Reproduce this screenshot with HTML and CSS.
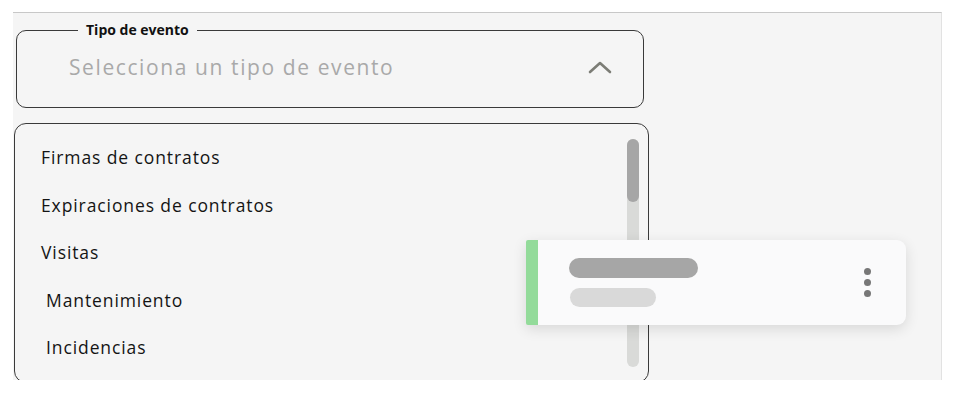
FILE: index.html
```html
<!DOCTYPE html>
<html lang="es">
<head>
<meta charset="utf-8">
<title>Tipo de evento</title>
<link rel="stylesheet" href="styles.css">
</head>
<body>
<div class="panel">
  <fieldset class="select">
    <legend class="select-label">Tipo de evento</legend>
    <div class="select-row">
      <span class="placeholder">Selecciona un tipo de evento</span>
      <svg class="chevron" width="24" height="14" viewBox="0 0 24 14" aria-hidden="true">
        <path d="M2 12 L12 3 L22 12" fill="none" stroke="#7c7d76" stroke-width="2.6" stroke-linecap="round" stroke-linejoin="round"/>
      </svg>
    </div>
  </fieldset>

  <div class="menu">
    <ul class="menu-items">
      <li class="menu-item">Firmas de contratos</li>
      <li class="menu-item">Expiraciones de contratos</li>
      <li class="menu-item">Visitas</li>
      <li class="menu-item indent">Mantenimiento</li>
      <li class="menu-item indent">Incidencias</li>
    </ul>
    <div class="scroll-track"><div class="scroll-thumb"></div></div>
  </div>

  <div class="card">
    <div class="card-lines">
      <div class="line line-title"></div>
      <div class="line line-sub"></div>
    </div>
    <div class="dots">
      <span class="dot"></span><span class="dot"></span><span class="dot"></span>
    </div>
  </div>
</div>
</body>
</html>
```

FILE: styles.css
```css
html, body {
  margin: 0;
  padding: 0;
  background: #ffffff;
  font-family: "Open Sans", "Liberation Sans", sans-serif;
}

.panel {
  position: relative;
  box-sizing: border-box;
  margin: 12px 0 0 13px;
  width: 929px;
  height: 368px;
  background: #f5f5f5;
  border-top: 1px solid #c8c8c8;
  border-right: 1px solid #e2e2e2;
}

.select {
  box-sizing: border-box;
  margin: 9px 0 0 3px;
  width: 628px;
  padding: 0 31px 9px 0;
  border: 1px solid #3a3a3a;
  border-radius: 10px;
  min-inline-size: 0;
}

.select-label {
  margin-left: 61px;
  padding: 0 8px;
  font-size: 14px;
  line-height: 16px;
  font-weight: 700;
  letter-spacing: 0;
  color: #111111;
}

.select-row {
  height: 58px;
  display: flex;
  align-items: center;
  justify-content: space-between;
  padding-left: 52px;
  padding-bottom: 2px;
}

.placeholder {
  font-size: 21px;
  color: #a9a9a9;
  letter-spacing: 1.6px;
}

.chevron {
  display: block;
}

.menu {
  position: absolute;
  left: 1px;
  top: 110px;
  box-sizing: border-box;
  width: 635px;
  height: 260px;
  background: #f5f5f5;
  border: 1px solid #3a3a3a;
  border-radius: 12px;
  display: flex;
  z-index: 1;
}

.menu-items {
  flex: 1;
  list-style: none;
  margin: 0;
  padding: 10px 0 0 26px;
}

.menu-item {
  height: 47.5px;
  line-height: 47.5px;
  font-size: 17.5px;
  letter-spacing: 0.9px;
  color: #141414;
}

.menu-item.indent {
  padding-left: 5px;
}

.scroll-track {
  margin: 15px 9px 0 0;
  width: 12px;
  height: 228px;
  border-radius: 6px;
  background: #d9dad8;
}

.scroll-thumb {
  height: 63px;
  border-radius: 6px;
  background: #a6a6a6;
}

.card {
  position: absolute;
  left: 513px;
  top: 227px;
  z-index: 2;
  box-sizing: border-box;
  width: 380px;
  height: 85px;
  background: #fafafb;
  border-left: 12px solid #93db9a;
  border-radius: 2px 9px 9px 2px;
  box-shadow: 0 4px 14px rgba(0, 0, 0, 0.12);
  display: flex;
  align-items: center;
  justify-content: space-between;
  padding: 0 35px 0 31px;
}

.card-lines {
  display: flex;
  flex-direction: column;
  gap: 10px;
}

.line {
  border-radius: 10px;
}

.line-title {
  width: 129px;
  height: 20px;
  background: #a6a6a6;
}

.line-sub {
  margin-left: 1px;
  width: 86px;
  height: 19px;
  background: #d9d9d9;
}

.dots {
  display: flex;
  flex-direction: column;
  gap: 4px;
}

.dot {
  display: block;
  width: 7px;
  height: 7px;
  border-radius: 50%;
  background: #777777;
}
```
